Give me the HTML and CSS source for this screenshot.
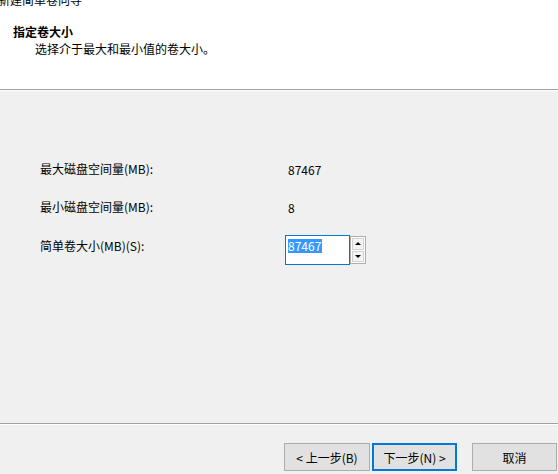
FILE: index.html
```html
<!DOCTYPE html>
<html lang="zh-CN">
<head>
  <meta charset="UTF-8">
  <title>新建简单卷向导</title>
  <link rel="stylesheet" href="styles.css">
</head>
<body>

  <div class="wizard">

    <!-- Kopfbereich mit Seitentitel -->
    <header class="wizard-header">
      <div class="window-title">新建简单卷向导</div>
      <h1 class="page-title">指定卷大小</h1>
      <p class="page-subtitle">选择介于最大和最小值的卷大小。</p>
    </header>

    <!-- Inhalt -->
    <main class="wizard-body">
      <div class="size-row">
        <span class="size-label">最大磁盘空间量(MB):</span>
        <span class="size-value">87467</span>
      </div>
      <div class="size-row">
        <span class="size-label">最小磁盘空间量(MB):</span>
        <span class="size-value">8</span>
      </div>
      <div class="size-row size-row-input">
        <label class="size-label" for="volSize">简单卷大小(MB)(S):</label>
        <div class="spin-box">
          <div class="spin-field" id="volSize"><span class="selected">87467</span></div>
          <div class="spin-buttons">
            <span class="spin-btn spin-up"></span>
            <span class="spin-btn spin-down"></span>
          </div>
        </div>
      </div>
    </main>

    <!-- Schaltflächen unten -->
    <footer class="wizard-footer">
      <button class="btn">&lt; 上一步(B)</button>
      <button class="btn btn-default">下一步(N) &gt;</button>
      <button class="btn btn-cancel">取消</button>
    </footer>

  </div>

</body>
</html>
```

FILE: styles.css
```css
/* Grundlayout des Dialogs */
body {
  margin: 0;
  padding: 0;
  font-family: "Noto Sans CJK SC", "Noto Sans", sans-serif;
  font-size: 12px;
  color: #000;
  background-color: #f0f0f0;
  overflow: hidden;
}

.wizard {
  display: flex;
  flex-direction: column;
  width: 558px;
  height: 474px;
}

/* Weisser Kopfbereich */
.wizard-header {
  height: 89px;
  background-color: #fff;
  border-bottom: 1px solid #a0a0a0;
  overflow: hidden;
}

.window-title {
  margin: -8px 0 0 -2px;
  line-height: 16px;
}

.page-title {
  margin: 16px 0 0 13px;
  font-size: 12px;
  font-weight: bold;
  line-height: 16px;
}

.page-subtitle {
  margin: 1px 0 0 35px;
  line-height: 16px;
}

/* Inhaltsbereich */
.wizard-body {
  flex: 1;
  border-top: 1px solid #fff;
  padding: 68px 0 0 40px;
}

.size-row {
  display: flex;
  align-items: center;
  height: 20px;
  margin-bottom: 18px;
}

.size-label {
  width: 245px;
  line-height: 20px;
}

.size-value {
  padding-left: 3px;
}

.size-row-input {
  align-items: flex-start;
  height: 30px;
}

.size-row-input .size-label {
  margin-top: 1px;
}

/* Zahlenfeld mit Pfeiltasten */
.spin-box {
  display: flex;
}

.spin-field {
  width: 60px;
  height: 28px;
  padding: 2px 0 0 2px;
  box-sizing: border-box;
  height: 30px;
  background-color: #fff;
  border: 1px solid #0078d7;
  line-height: 16px;
  width: 65px;
}

.selected {
  background-color: #3399ff;
  color: #fff;
  display: inline-block;
  line-height: 14px;
  padding: 0 1px 0 0;
}

.spin-buttons {
  display: flex;
  flex-direction: column;
  width: 16px;
  height: 28px;
  margin-top: 1px;
  border: 1px solid #adadad;
  box-sizing: border-box;
  background-color: #fff;
}

.spin-btn {
  flex: 1;
  position: relative;
  margin: 1px;
  background-color: #f4f4f4;
  border: 1px solid #d2d2d2;
}

.spin-up {
  margin-bottom: 0;
}

.spin-btn::after {
  content: "";
  position: absolute;
  left: 50%;
  top: 50%;
  margin-left: -3px;
  border-left: 3px solid transparent;
  border-right: 3px solid transparent;
}

.spin-up::after {
  margin-top: -2px;
  border-bottom: 3px solid #000;
}

.spin-down::after {
  margin-top: -1px;
  border-top: 3px solid #000;
}

/* Schaltflächenleiste */
.wizard-footer {
  display: flex;
  justify-content: flex-end;
  padding: 19px 1px 3px 0;
  border-top: 1px solid #a0a0a0;
  box-shadow: inset 0 1px 0 #fff;
}

.btn {
  width: 86px;
  height: 28px;
  margin: 0;
  padding: 0;
  font-family: inherit;
  font-size: 12px;
  color: #000;
  background-color: #e1e1e1;
  border: 1px solid #adadad;
  box-sizing: border-box;
}

.btn-default {
  width: 85px;
  margin-left: 2px;
  border: 2px solid #0078d7;
}

.btn-cancel {
  width: 85px;
  margin-left: 15px;
}
```
